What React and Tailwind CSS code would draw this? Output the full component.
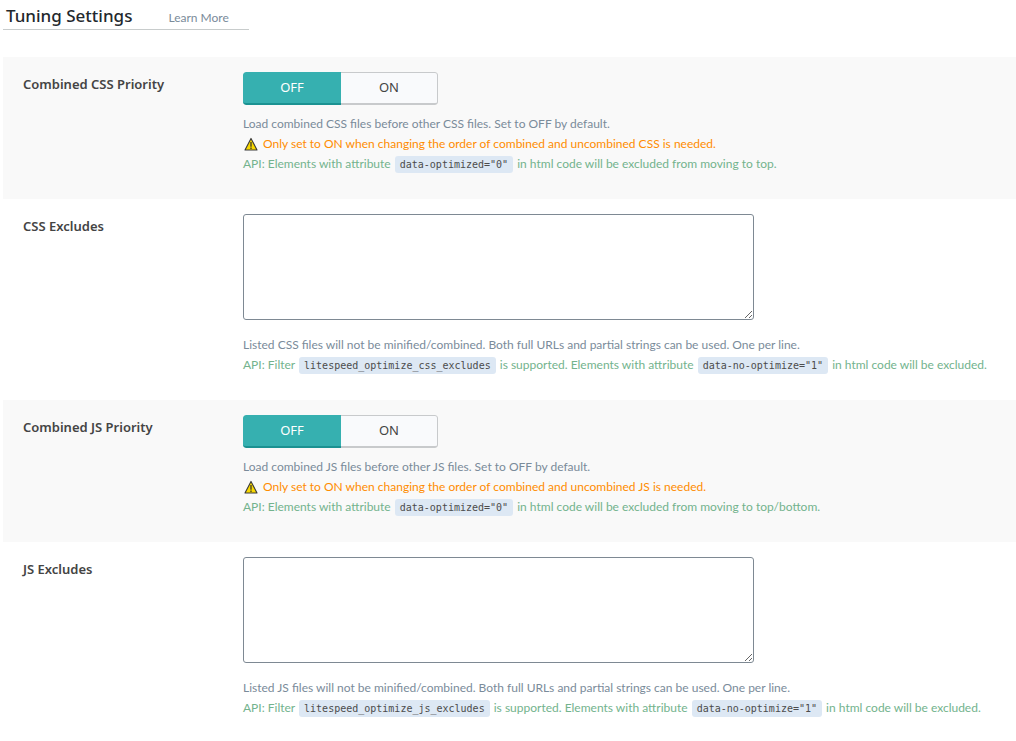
import React, { useState } from "react";

const settings = [
    {
        id: "css-priority",
        type: "toggle",
        label: "Combined CSS Priority",
        desc: "Load combined CSS files before other CSS files. Set to OFF by default.",
        warning: "Only set to ON when changing the order of combined and uncombined CSS is needed.",
        api: ["API: Elements with attribute ", { code: 'data-optimized="0"' }, " in html code will be excluded from moving to top."]
    },
    {
        id: "css-excludes",
        type: "textarea",
        label: "CSS Excludes",
        desc: "Listed CSS files will not be minified/combined. Both full URLs and partial strings can be used. One per line.",
        api: [
            "API: Filter ",
            { code: "litespeed_optimize_css_excludes" },
            " is supported. Elements with attribute ",
            { code: 'data-no-optimize="1"' },
            " in html code will be excluded."
        ]
    },
    {
        id: "js-priority",
        type: "toggle",
        label: "Combined JS Priority",
        desc: "Load combined JS files before other JS files. Set to OFF by default.",
        warning: "Only set to ON when changing the order of combined and uncombined JS is needed.",
        api: ["API: Elements with attribute ", { code: 'data-optimized="0"' }, " in html code will be excluded from moving to top/bottom."]
    },
    {
        id: "js-excludes",
        type: "textarea",
        label: "JS Excludes",
        desc: "Listed JS files will not be minified/combined. Both full URLs and partial strings can be used. One per line.",
        api: [
            "API: Filter ",
            { code: "litespeed_optimize_js_excludes" },
            " is supported. Elements with attribute ",
            { code: 'data-no-optimize="1"' },
            " in html code will be excluded."
        ]
    }
];

function WarningIcon() {
    return (
        <svg viewBox="0 0 16 16" className="w-4 h-4 shrink-0" aria-hidden="true">
            <path d="M8 2.4 L14 14 H2 Z" fill="#f8d800" stroke="#3a3a3a" strokeWidth="1.1" strokeLinejoin="round" />
            <path d="M8 6 V10.8" stroke="#2a2a2a" strokeWidth="1.2" />
            <path d="M8 11.6 V13" stroke="#2a2a2a" strokeWidth="1.2" />
        </svg>
    );
}

function Toggle({ id }) {
    const [value, setValue] = useState("OFF");

    return (
        <div
            role="group"
            aria-labelledby={id}
            className="grid grid-cols-[98px_97px] w-fit h-[33px] rounded-[3px] overflow-hidden text-[13px] font-['Noto_Sans',sans-serif]"
        >
            {["OFF", "ON"].map((option) => (
                <button
                    key={option}
                    type="button"
                    aria-pressed={value === option}
                    onClick={() => setValue(option)}
                    className={
                        value === option
                            ? "bg-[#36b0b0] text-white border-b-2 border-[#1b9292] rounded-l-[3px]"
                            : "bg-[#f9fafc] text-[#444] border border-l-0 border-b-2 border-[#c8cacc] rounded-r-[3px]"
                    }
                >
                    {option}
                </button>
            ))}
        </div>
    );
}

function SettingRow({ setting }) {
    const isToggle = setting.type === "toggle";

    return (
        <div className={`flex pt-[15px] pb-[25px] pl-5 ${isToggle ? "bg-[#f9f9f9]" : "bg-white"}`}>
            <div className="w-[220px] shrink-0 pt-0.5 text-[13px] leading-5 font-semibold text-[#444] font-['Noto_Sans',sans-serif]">
                {isToggle ? (
                    <span id={setting.id}>{setting.label}</span>
                ) : (
                    <label htmlFor={setting.id}>{setting.label}</label>
                )}
            </div>
            <div className="flex-1 min-w-0">
                {isToggle ? (
                    <Toggle id={setting.id} />
                ) : (
                    <textarea
                        id={setting.id}
                        className="block w-full max-w-[511px] h-[106px] p-2 text-sm bg-white border border-[#7e8993] rounded-[3px]"
                    />
                )}
                <div className={`text-xs leading-5 text-[#7a8b9a] ${isToggle ? "mt-[9px]" : "mt-[15px]"}`}>
                    <p>{setting.desc}</p>
                    {setting.warning && (
                        <p className="flex items-center gap-1 text-[#ff8c00]">
                            <WarningIcon />
                            {setting.warning}
                        </p>
                    )}
                    <p className="text-[#73b38d]">
                        {setting.api.map((part, i) =>
                            part.code ? (
                                <code
                                    key={i}
                                    className="mx-px px-[5px] py-[3px] rounded-[3px] bg-[#dde8f4] text-[#4c4c4c] text-[10px] leading-none font-['DejaVu_Sans_Mono',monospace]"
                                >
                                    {part.code}
                                </code>
                            ) : (
                                <span key={i}>{part}</span>
                            )
                        )}
                    </p>
                </div>
            </div>
        </div>
    );
}

function App() {
    return (
        <main className="pl-[3px] bg-white font-['Lato',sans-serif]">
            <header className="flex items-baseline gap-9 w-fit h-[30px] pt-1 pl-[3px] pr-5 border-b border-[#c8cccc]">
                <h1 className="text-[17px] leading-6 font-medium text-[#23282d] font-['Noto_Sans',sans-serif]">Tuning Settings</h1>
                <a href="#learn-more" className="text-xs text-[#7a8b9a]">
                    Learn More
                </a>
            </header>
            <form className="mt-[27px]">
                {settings.map((setting) => (
                    <SettingRow key={setting.id} setting={setting} />
                ))}
            </form>
        </main>
    );
}

export default App;
